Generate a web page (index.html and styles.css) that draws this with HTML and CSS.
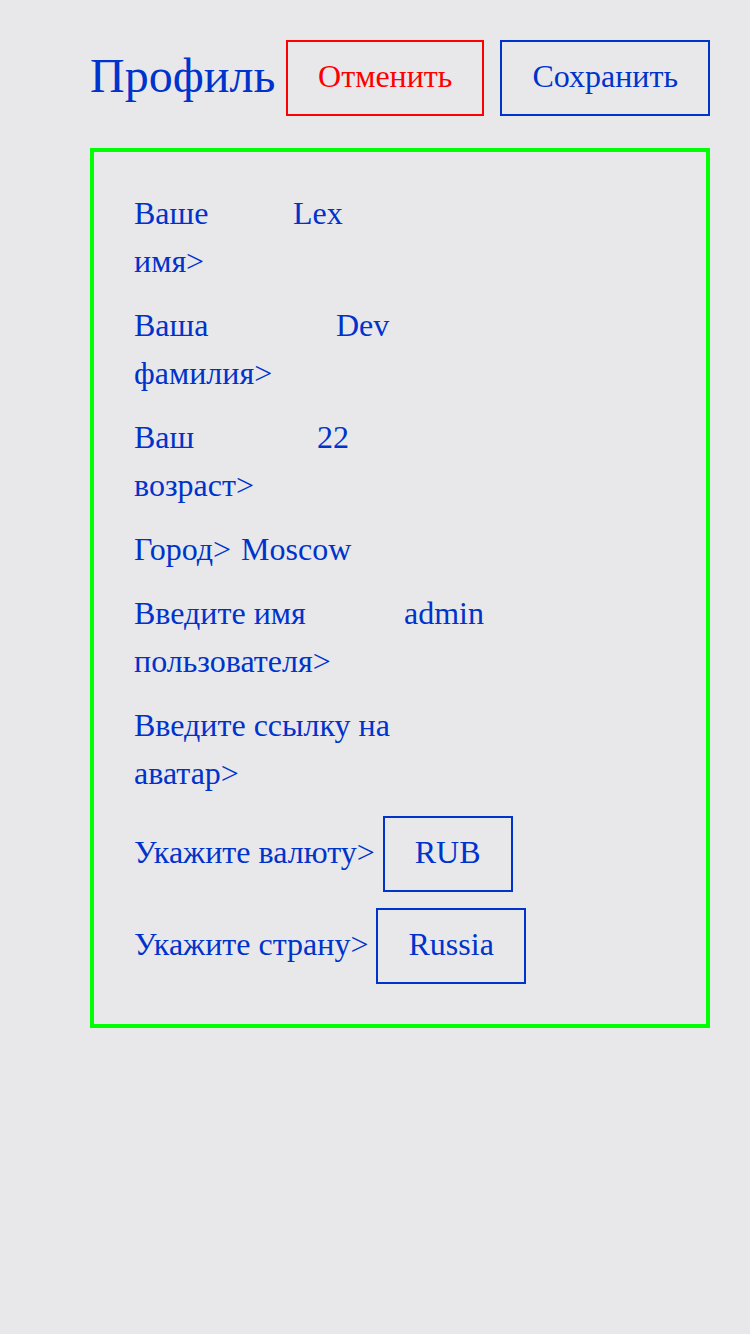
FILE: index.html
```html
<!DOCTYPE html>
<html lang="ru">
<head>
<meta charset="utf-8">
<link rel="stylesheet" href="styles.css">
<title>Профиль</title>
</head>
<body>
<div class="page">
  <header class="header">
    <h1 class="title">Профиль</h1>
    <button class="btn btn-cancel">Отменить</button>
    <button class="btn btn-save">Сохранить</button>
  </header>
  <section class="card">
    <div class="row"><span class="label w-name">Ваше имя&gt;</span><span class="value">Lex</span></div>
    <div class="row"><span class="label w-surname">Ваша фамилия&gt;</span><span class="value">Dev</span></div>
    <div class="row"><span class="label w-age">Ваш возраст&gt;</span><span class="value">22</span></div>
    <div class="row"><span class="label">Город&gt;</span><span class="value">Moscow</span></div>
    <div class="row"><span class="label w-user">Введите имя пользователя&gt;</span><span class="value">admin</span></div>
    <div class="row"><span class="label w-avatar">Введите ссылку на аватар&gt;</span></div>
    <div class="row row-select first-select"><span class="label">Укажите валюту&gt;</span><span class="select">RUB</span></div>
    <div class="row row-select"><span class="label">Укажите страну&gt;</span><span class="select">Russia</span></div>
  </section>
</div>
</body>
</html>
```

FILE: styles.css
```css
html, body {
  margin: 0;
  padding: 0;
  background: #e8e8ea;
}
body {
  font-family: "Liberation Serif", "Times New Roman", serif;
  color: #0033cc;
}
.page {
  width: 620px;
  margin: 0 0 0 90px;
  padding-top: 40px;
}
.header {
  display: flex;
  align-items: flex-start;
}
.title {
  margin: 0 auto 0 0;
  font-weight: normal;
  font-size: 48px;
  line-height: 71px;
  color: #0033cc;
}
.btn {
  box-sizing: border-box;
  height: 76px;
  padding: 0 30px 4px;
  background: transparent;
  font-family: "Liberation Serif", "Times New Roman", serif;
  font-size: 32px;
  border: 2px solid #0033cc;
  color: #0033cc;
}
.btn-cancel {
  border-color: #ff0000;
  color: #ff0000;
}
.btn-save {
  margin-left: 16px;
}
.card {
  margin-top: 32px;
  border: 4px solid #00ff00;
  padding: 37px 40px 40px;
  display: flex;
  flex-direction: column;
  gap: 16px;
}
.row {
  display: flex;
  align-items: flex-start;
  gap: 10px;
  font-size: 32px;
  line-height: 48px;
}
.label { flex: none; }
.w-name { width: 149px; }
.w-surname { width: 192px; }
.w-age { width: 173px; }
.w-user { width: 260px; }
.w-avatar { width: 280px; }
.row-select {
  align-items: center;
  gap: 8px;
}
.row-select .label {
  padding-bottom: 4px;
}
.first-select { margin-top: 3px; }
.select {
  box-sizing: border-box;
  height: 76px;
  padding: 0 30px 4px;
  border: 2px solid #0033cc;
  display: flex;
  align-items: center;
}
```
